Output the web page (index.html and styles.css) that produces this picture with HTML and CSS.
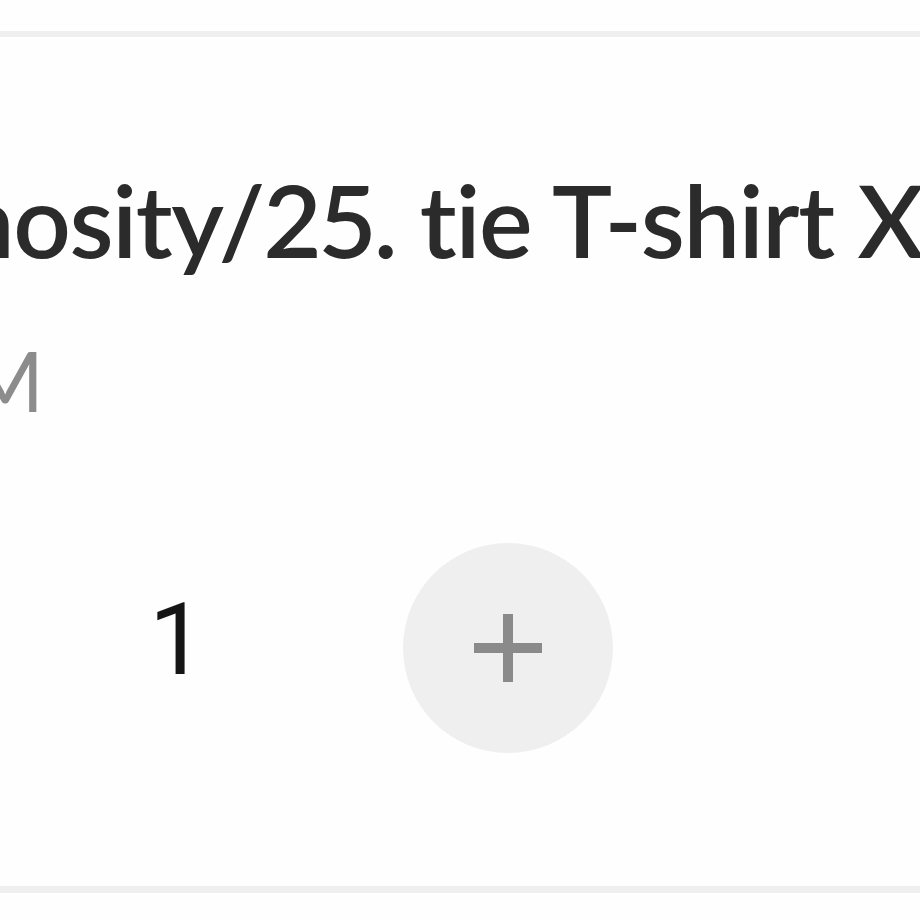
FILE: index.html
```html
<!DOCTYPE html>
<html>
<head>
<meta charset="utf-8">
<link rel="stylesheet" href="styles.css">
</head>
<body>
<div class="item">
  <div class="title">nosity/25. tie T-shirt XL</div>
  <div class="size">M</div>
  <div class="qty">
    <span class="count">1</span>
    <button class="plus" aria-label="Increase">
      <svg width="72" height="72" viewBox="0 0 72 72"><path d="M36 2V70M2 36H70" stroke="#8a8a8a" stroke-width="10" fill="none"/></svg>
    </button>
  </div>
</div>
</body>
</html>
```
FILE: styles.css
```css
html, body {
  margin: 0;
  padding: 0;
  background: #fefefe;
  overflow: hidden;
}
.item {
  margin-top: 31px;
  border-top: 6px solid #efefef;
  border-bottom: 7px solid #efefef;
  padding: 122px 0 133px 0;
  font-family: Lato, "Open Sans", sans-serif;
}
.title {
  font-size: 101px;
  line-height: 1.2;
  font-weight: 600;
  color: #2b2b2b;
  white-space: nowrap;
  margin-left: -42px;
  letter-spacing: -1.4px;
  font-variant-ligatures: none;
  font-variant-numeric: proportional-nums;
  font-feature-settings: "liga" 0, "clig" 0, "pnum" 1;
}
.size {
  margin-top: 50px;
  font-size: 84px;
  line-height: 1.2;
  font-weight: 400;
  color: #8c8c8c;
  margin-left: -34px;
}
.qty {
  margin-top: 112px;
  display: flex;
  align-items: center;
}
.count {
  font-family: Roboto, "Noto Sans", sans-serif;
  font-size: 100px;
  line-height: 1.2;
  color: #151515;
  margin-left: 149px;
  margin-bottom: 16px;
}
.plus {
  margin-left: 198px;
  width: 210px;
  height: 210px;
  border-radius: 50%;
  border: none;
  background: #efefef;
  display: flex;
  align-items: center;
  justify-content: center;
  padding: 0;
}
```
